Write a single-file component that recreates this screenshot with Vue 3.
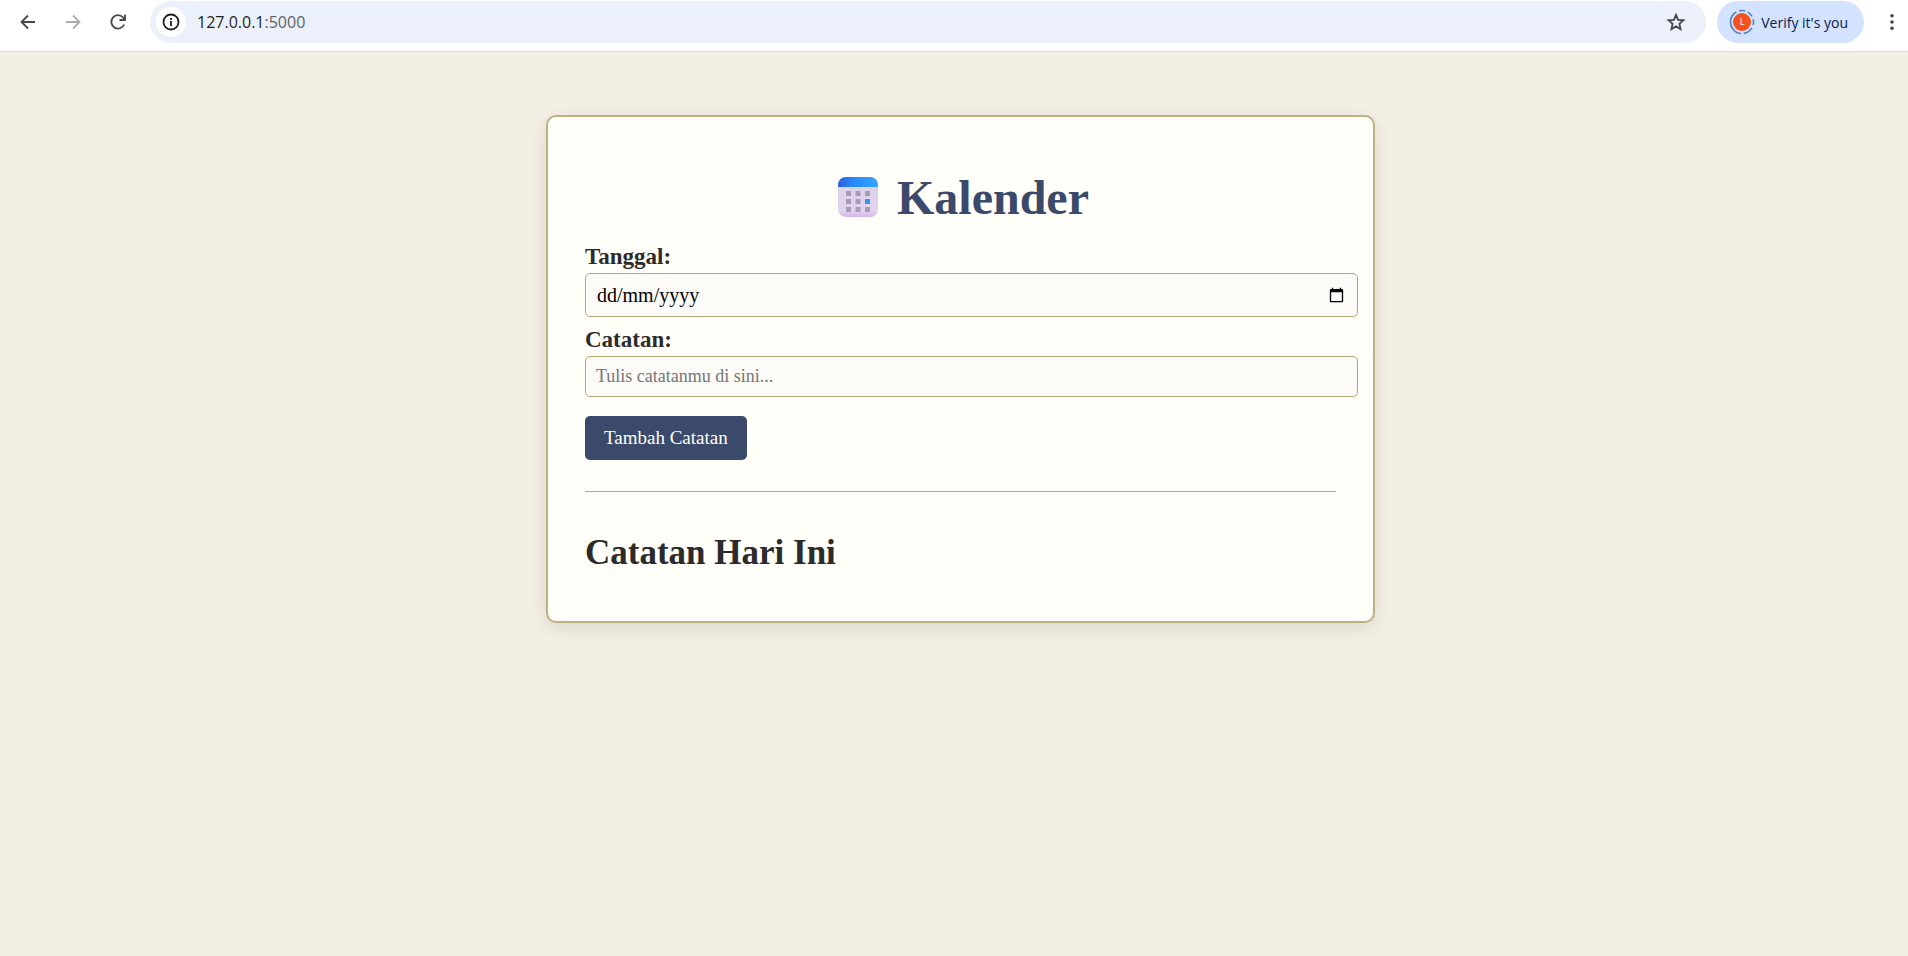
<template>
  <div class="browser">
    <header class="toolbar">
      <button class="nav_btn" aria-label="Back">
        <svg viewBox="0 0 20 20" class="icon"><path d="M17 10H4M10 3.500L3.500 10l6.500 6.500" /></svg>
      </button>
      <button class="nav_btn disabled" aria-label="Forward">
        <svg viewBox="0 0 20 20" class="icon"><path d="M3 10h13M10 3.500L16.500 10l-6.500 6.500" /></svg>
      </button>
      <button class="nav_btn" aria-label="Reload" @click="reload">
        <svg viewBox="0 0 20 20" class="icon"><path d="M16.200 12.500A6.700 6.700 0 1 1 15 5.400L17 7.500M17 2.500V8H11.500" /></svg>
      </button>
      <div class="address">
        <button class="site_info" aria-label="Site information">
          <svg viewBox="0 0 20 20" class="icon"><circle cx="10" cy="10" r="7.500" /><path d="M10 9v5M10 6v2" /></svg>
        </button>
        <a class="url" href="#">127.0.0.1<span>:5000</span></a>
        <button class="star" aria-label="Bookmark">
          <svg viewBox="0 0 20 20" class="icon"><path d="M10 2.800l2.100 5 5.400.5-4.100 3.600 1.200 5.300L10 14.400l-4.600 2.800 1.200-5.300-4.100-3.600 5.400-.5z" /></svg>
        </button>
      </div>
      <button class="profile">
        <svg viewBox="0 0 26 26" class="avatar">
          <circle cx="13" cy="13" r="11.500" fill="none" stroke="#5b7fbd" stroke-width="1.600" stroke-dasharray="29 3 6 3 6 3 6 3 10 3.300" transform="rotate(95 13 13)" />
          <circle cx="13" cy="13" r="9" fill="#f4511e" />
          <text x="13" y="16" text-anchor="middle">L</text>
        </svg>
        Verify it's you
      </button>
      <button class="menu" aria-label="Menu">
        <svg viewBox="0 0 20 20" class="dots"><circle cx="10" cy="3" r="2" /><circle cx="10" cy="10" r="2" /><circle cx="10" cy="17" r="2" /></svg>
      </button>
    </header>
    <main class="page">
      <div class="container">
        <h1>
          <svg viewBox="0 0 40 40" class="calendar" aria-hidden="true">
            <defs>
              <linearGradient id="top" x1="0" x2="1" y1="0" y2="0">
                <stop offset="0" stop-color="#2b5fe0" />
                <stop offset=".35" stop-color="#2687f8" />
                <stop offset="1" stop-color="#35a5ff" />
              </linearGradient>
              <linearGradient id="sheet" x1="0" x2="0" y1="0" y2="1">
                <stop offset="0" stop-color="#dcd3e8" />
                <stop offset=".85" stop-color="#e0d3ef" />
                <stop offset="1" stop-color="#d3b6ea" />
              </linearGradient>
            </defs>
            <rect width="40" height="40" rx="8" fill="url(#sheet)" />
            <path d="M0 10V8a8 8 0 0 1 8-8h24a8 8 0 0 1 8 8v2z" fill="url(#top)" />
            <rect
              v-for="n in 9"
              :key="n"
              :x="8 + ((n - 1) % 3) * 9.500"
              :y="14 + Math.floor((n - 1) / 3) * 8"
              width="5"
              height="5"
              :fill="n === 6 ? '#3f92ea' : '#a79bb4'"
            />
          </svg>
          <span>Kalender</span>
        </h1>
        <form @submit.prevent="tambah">
          <label for="tanggal">Tanggal:</label>
          <div class="date_con">
            <input id="tanggal" v-model="tanggal" type="date">
            <span class="date_text">{{ tanggalText }}</span>
          </div>
          <label for="catatan">Catatan:</label>
          <input id="catatan" v-model="catatan" type="text" placeholder="Tulis catatanmu di sini...">
          <button class="submit" type="submit">Tambah Catatan</button>
        </form>
        <hr>
        <h2>Catatan Hari Ini</h2>
        <ul v-if="daftar.length">
          <li v-for="(item, i) in daftar" :key="i">{{ item }}</li>
        </ul>
      </div>
    </main>
  </div>
</template>

<script setup>
import {ref, computed} from "vue";
const tanggal = ref('')
const catatan = ref('')
const daftar = ref([])

// day first, whatever the browser locale is
const tanggalText = computed(() => {
  return tanggal.value ? tanggal.value.split('-').reverse().join('/') : 'dd/mm/yyyy'
})
const tambah = () => {
  if (catatan.value === '') return
  daftar.value.push(catatan.value)
  catatan.value = ''
}
const reload = () => {
  window.location.reload()
}
</script>

<style>
body {
  margin: 0;
  background-color: #f4efe4;
}
</style>

<style scoped>
.toolbar {
  display: flex;
  align-items: center;
  height: 52px;
  padding: 1px 6px 8px 12px;
  box-sizing: border-box;
  background-color: #ffffff;
  border-bottom: 1px solid #dddddd;
  font-family: "Open Sans", sans-serif;
}

.toolbar button {
  display: flex;
  align-items: center;
  justify-content: center;
  padding: 0;
  border: none;
  background: none;
}

.icon {
  width: 20px;
  height: 20px;
  fill: none;
  stroke: #474747;
  stroke-width: 1.8;
}

.toolbar .nav_btn {
  width: 32px;
  height: 32px;
  margin-right: 13px;
}

.disabled .icon {
  stroke: #ababab;
}

.address {
  display: flex;
  flex: 1;
  align-items: center;
  height: 42px;
  margin: 0 11px 0 3px;
  padding: 0 20px 0 6px;
  box-sizing: border-box;
  border-radius: 21px;
  background-color: #ebf0fa;
}

.toolbar .site_info {
  width: 30px;
  height: 30px;
  border-radius: 50%;
  background-color: #ffffff;
}

.site_info .icon {
  stroke: #1f1f1f;
}

.url {
  flex: 1;
  margin-left: 11px;
  font-size: 16px;
  color: #1f1f1f;
  text-decoration: none;
}

.url span {
  color: #5f6368;
}

.toolbar .profile {
  gap: 6px;
  height: 42px;
  padding: 0 16px 0 12px;
  border-radius: 21px;
  background-color: #d3e3fd;
  color: #0a2050;
  font-family: inherit;
  font-size: 14px;
}

.avatar {
  width: 26px;
  height: 26px;
}

.avatar text {
  fill: #ffffff;
  font-size: 9px;
}

.toolbar .menu {
  width: 20px;
  margin-left: 18px;
}

.dots {
  width: 20px;
  height: 18px;
  fill: #474747;
}

.page {
  padding: 63px 0 63px 13px;
  font-family: Georgia, "Liberation Serif", serif;
  color: #2b2b2b;
}

.container {
  max-width: 829px;
  margin: 0 auto;
  padding: 37px;
  box-sizing: border-box;
  background-color: #fffef9;
  border: 2px solid #bfb083;
  border-radius: 10px;
  box-shadow: 0 5px 18px rgba(0, 0, 0, 0.1);
}

h1 {
  display: flex;
  align-items: center;
  justify-content: center;
  gap: 19px;
  height: 48px;
  margin: 19px 0 20px;
  font-size: 48px;
  color: #3b4a6b;
}

.calendar {
  width: 40px;
  height: 40px;
  margin-left: 6px;
}

label {
  display: block;
  height: 24px;
  margin-bottom: 8px;
  line-height: 32px;
  font-size: 23px;
  font-weight: bold;
}

input {
  display: block;
  width: 100%;
  height: 39px;
  padding: 0 10px;
  border: 1px solid #b5a878;
  border-radius: 5px;
  background-color: #fcfbf7;
  font-family: inherit;
  font-size: 18px;
  color: #000000;
}

.date_con {
  position: relative;
  margin-bottom: 7px;
}

.date_con input {
  height: 42px;
}

.date_con input::-webkit-datetime-edit {
  color: transparent;
}

.date_con input::-webkit-calendar-picker-indicator {
  width: 17px;
  height: 17px;
}

.date_text {
  position: absolute;
  top: 0;
  left: 12px;
  line-height: 44px;
  font-size: 20px;
  color: #000000;
  pointer-events: none;
}

::placeholder {
  color: #757575;
}

.submit {
  height: 44px;
  margin-top: 19px;
  padding: 0 19px;
  border: none;
  border-radius: 5px;
  background-color: #3b4a6b;
  color: #ffffff;
  font-family: inherit;
  font-size: 19px;
}

hr {
  margin: 31px 0 42px;
  border: none;
  border-top: 1px solid #b5a878;
}

h2 {
  margin: 0 0 12px;
  line-height: 38px;
  font-size: 35px;
}
</style>
